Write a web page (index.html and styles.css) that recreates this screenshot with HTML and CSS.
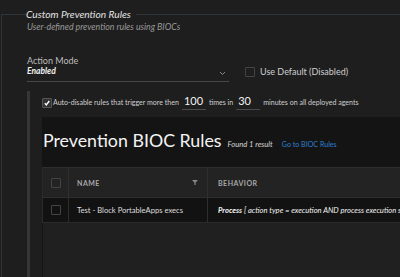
FILE: index.html
```html
<!DOCTYPE html>
<html lang="en">
<head>
    <meta charset="UTF-8">
    <title>Custom Prevention Rules</title>
    <link rel="stylesheet" href="styles.css">
</head>
<body>
<fieldset class="rules-box">
    <legend>Custom Prevention Rules</legend>
    <p class="subtitle">User-defined prevention rules using BIOCs</p>

    <div class="mode-row">
        <div class="mode-field">
            <label class="field-label">Action Mode</label>
            <div class="select">
                <span class="select-value">Enabled</span>
                <svg class="chevron" width="7" height="5" viewBox="0 0 7 5"><path d="M1 1l2.5 2.5L6 1" fill="none" stroke="#888" stroke-width="1"/></svg>
            </div>
        </div>
        <label class="check-label">
            <span class="box"></span>
            Use Default (Disabled)
        </label>
    </div>

    <div class="nested">
        <div class="auto-row">
            <span class="box checked">
                <svg width="8" height="8" viewBox="0 0 8 8"><path d="M1.8 4.3l1.5 1.6L6.3 2" fill="none" stroke="#fff" stroke-width="1.4"/></svg>
            </span>
            <span>Auto-disable rules that trigger more then</span>
            <span class="num-input">100</span>
            <span>times in</span>
            <span class="num-input">30</span>
            <span>minutes on all deployed agents</span>
        </div>

        <div class="panel">
            <div class="panel-head">
                <h2>Prevention BIOC Rules</h2>
                <span class="found">Found 1 result</span>
                <a class="link" href="#">Go to BIOC Rules</a>
            </div>
            <div class="table">
                <div class="tr th">
                    <div class="cell cell-check"><span class="box"></span></div>
                    <div class="cell cell-name">
                        NAME
                        <svg width="6" height="5" viewBox="0 0 6 5"><path d="M0 0h6L3.6 2.6V5H2.4V2.6z" fill="#888"/></svg>
                    </div>
                    <div class="cell cell-behavior">BEHAVIOR</div>
                </div>
                <div class="tr td">
                    <div class="cell cell-check"><span class="box"></span></div>
                    <div class="cell cell-name">Test - Block PortableApps execs</div>
                    <div class="cell cell-behavior"><span class="clip"><b>Process</b> [ action type = execution AND process execution signer = PortableApps.com ]</span></div>
                </div>
            </div>
            <div class="table-rest"></div>
        </div>
    </div>
</fieldset>
</body>
</html>
```
FILE: styles.css
```css
body {
    margin: 0;
    background: #1e1e1e;
    font-family: Lato, 'Open Sans', sans-serif;
    color: #ddd;
    height: 277px;
    overflow: hidden;
}

.rules-box {
    margin: 8px 0 0 1px;
    padding: 0 0 0 25px;
    border: none;
    border-top: 1px solid #2f343b;
    border-left: 1px solid #2f343b;
    min-width: 0;
}

.rules-box legend {
    padding: 0 5px 0 0;
    margin-left: -1px;
    font-size: 10.2px;
    line-height: 12px;
    font-style: italic;
    color: #e4e4e4;
}

.subtitle {
    margin: 1px 0 0 0;
    font-size: 8.8px;
    line-height: 12px;
    font-style: italic;
    color: #9a9a9a;
}

.mode-row {
    display: flex;
    align-items: flex-end;
    margin-top: 22px;
}

.mode-field {
    width: 202px;
}

.field-label {
    display: block;
    font-size: 9px;
    line-height: 11px;
    color: #bdbdbd;
}

.select {
    display: flex;
    justify-content: space-between;
    align-items: center;
    border-bottom: 1px solid #474747;
    padding: 0 0 4px 0;
}

.select-value {
    font-size: 8.5px;
    line-height: 11px;
    font-weight: bold;
    font-style: italic;
    color: #f0f0f0;
}

.chevron {
    margin: 3px 3px 0 0;
}

.check-label {
    display: flex;
    align-items: center;
    gap: 5px;
    margin: 0 0 5px 16px;
    font-size: 9px;
    line-height: 11px;
    color: #cfcfcf;
}

.box {
    display: inline-flex;
    align-items: center;
    justify-content: center;
    width: 8px;
    height: 8px;
    border: 1px solid #444;
    border-radius: 1px;
    flex: none;
}

.box.checked {
    background: #333;
    border-color: #555;
}

.nested {
    margin-top: 9px;
    border-left: 3px solid #363636;
    padding-left: 12px;
}

.auto-row {
    display: flex;
    align-items: center;
    padding-top: 4px;
    font-size: 7.05px;
    color: #cfcfcf;
    white-space: nowrap;
}

.auto-row .box {
    margin-right: 1px;
}

.num-input {
    width: 22px;
    margin: 0 3px 0 3px;
    padding: 0 0 2px 2px;
    border-bottom: 1px solid #4a4a4a;
    font-size: 11px;
    line-height: 12px;
    color: #f2f2f2;
}

.panel {
    margin-top: 7px;
    background: #141414;
    margin-right: -20px;
}

.panel-head {
    display: flex;
    align-items: baseline;
    padding: 13px 0 0 1px;
    height: 50px;
    box-sizing: border-box;
    white-space: nowrap;
}

.panel-head h2 {
    margin: 0;
    font-size: 17.8px;
    line-height: 21px;
    font-weight: normal;
    color: #f4f4f4;
}

.found {
    margin-left: 6px;
    font-size: 7.6px;
    font-style: italic;
    color: #d6d6d6;
}

.link {
    margin-left: 9px;
    font-size: 7.1px;
    color: #2d7fd1;
    text-decoration: none;
}

.table {
    border-left: 1px solid #2a2a2a;
}

.tr {
    display: flex;
    white-space: nowrap;
}

.th {
    height: 29px;
    background: #232323;
    border-top: 1px solid #2e2e2e;
    border-bottom: 1px solid #2e2e2e;
    font-size: 7px;
    font-weight: bold;
    letter-spacing: 0.5px;
    color: #a8a8a8;
}

.td {
    height: 24px;
    background: #121212;
    border-bottom: 1px solid #2a2a2a;
    font-size: 7.6px;
    color: #dedede;
}

.cell {
    display: flex;
    align-items: center;
    box-sizing: border-box;
}

.cell-check {
    width: 26px;
    justify-content: center;
    border-right: 1px solid #2e2e2e;
}

.cell-name {
    width: 139px;
    padding: 0 9px 0 8px;
    justify-content: space-between;
    border-right: 1px solid #2e2e2e;
}

.cell-behavior {
    flex: 1;
    min-width: 0;
    padding-left: 10px;
    overflow: hidden;
}

.td .cell-behavior {
    font-style: italic;
    color: #f2f2f2;
}

.clip {
    overflow: hidden;
    text-overflow: clip;
}

.table-rest {
    height: 60px;
    background: #202020;
    border-left: 1px solid #141414;
}
```
